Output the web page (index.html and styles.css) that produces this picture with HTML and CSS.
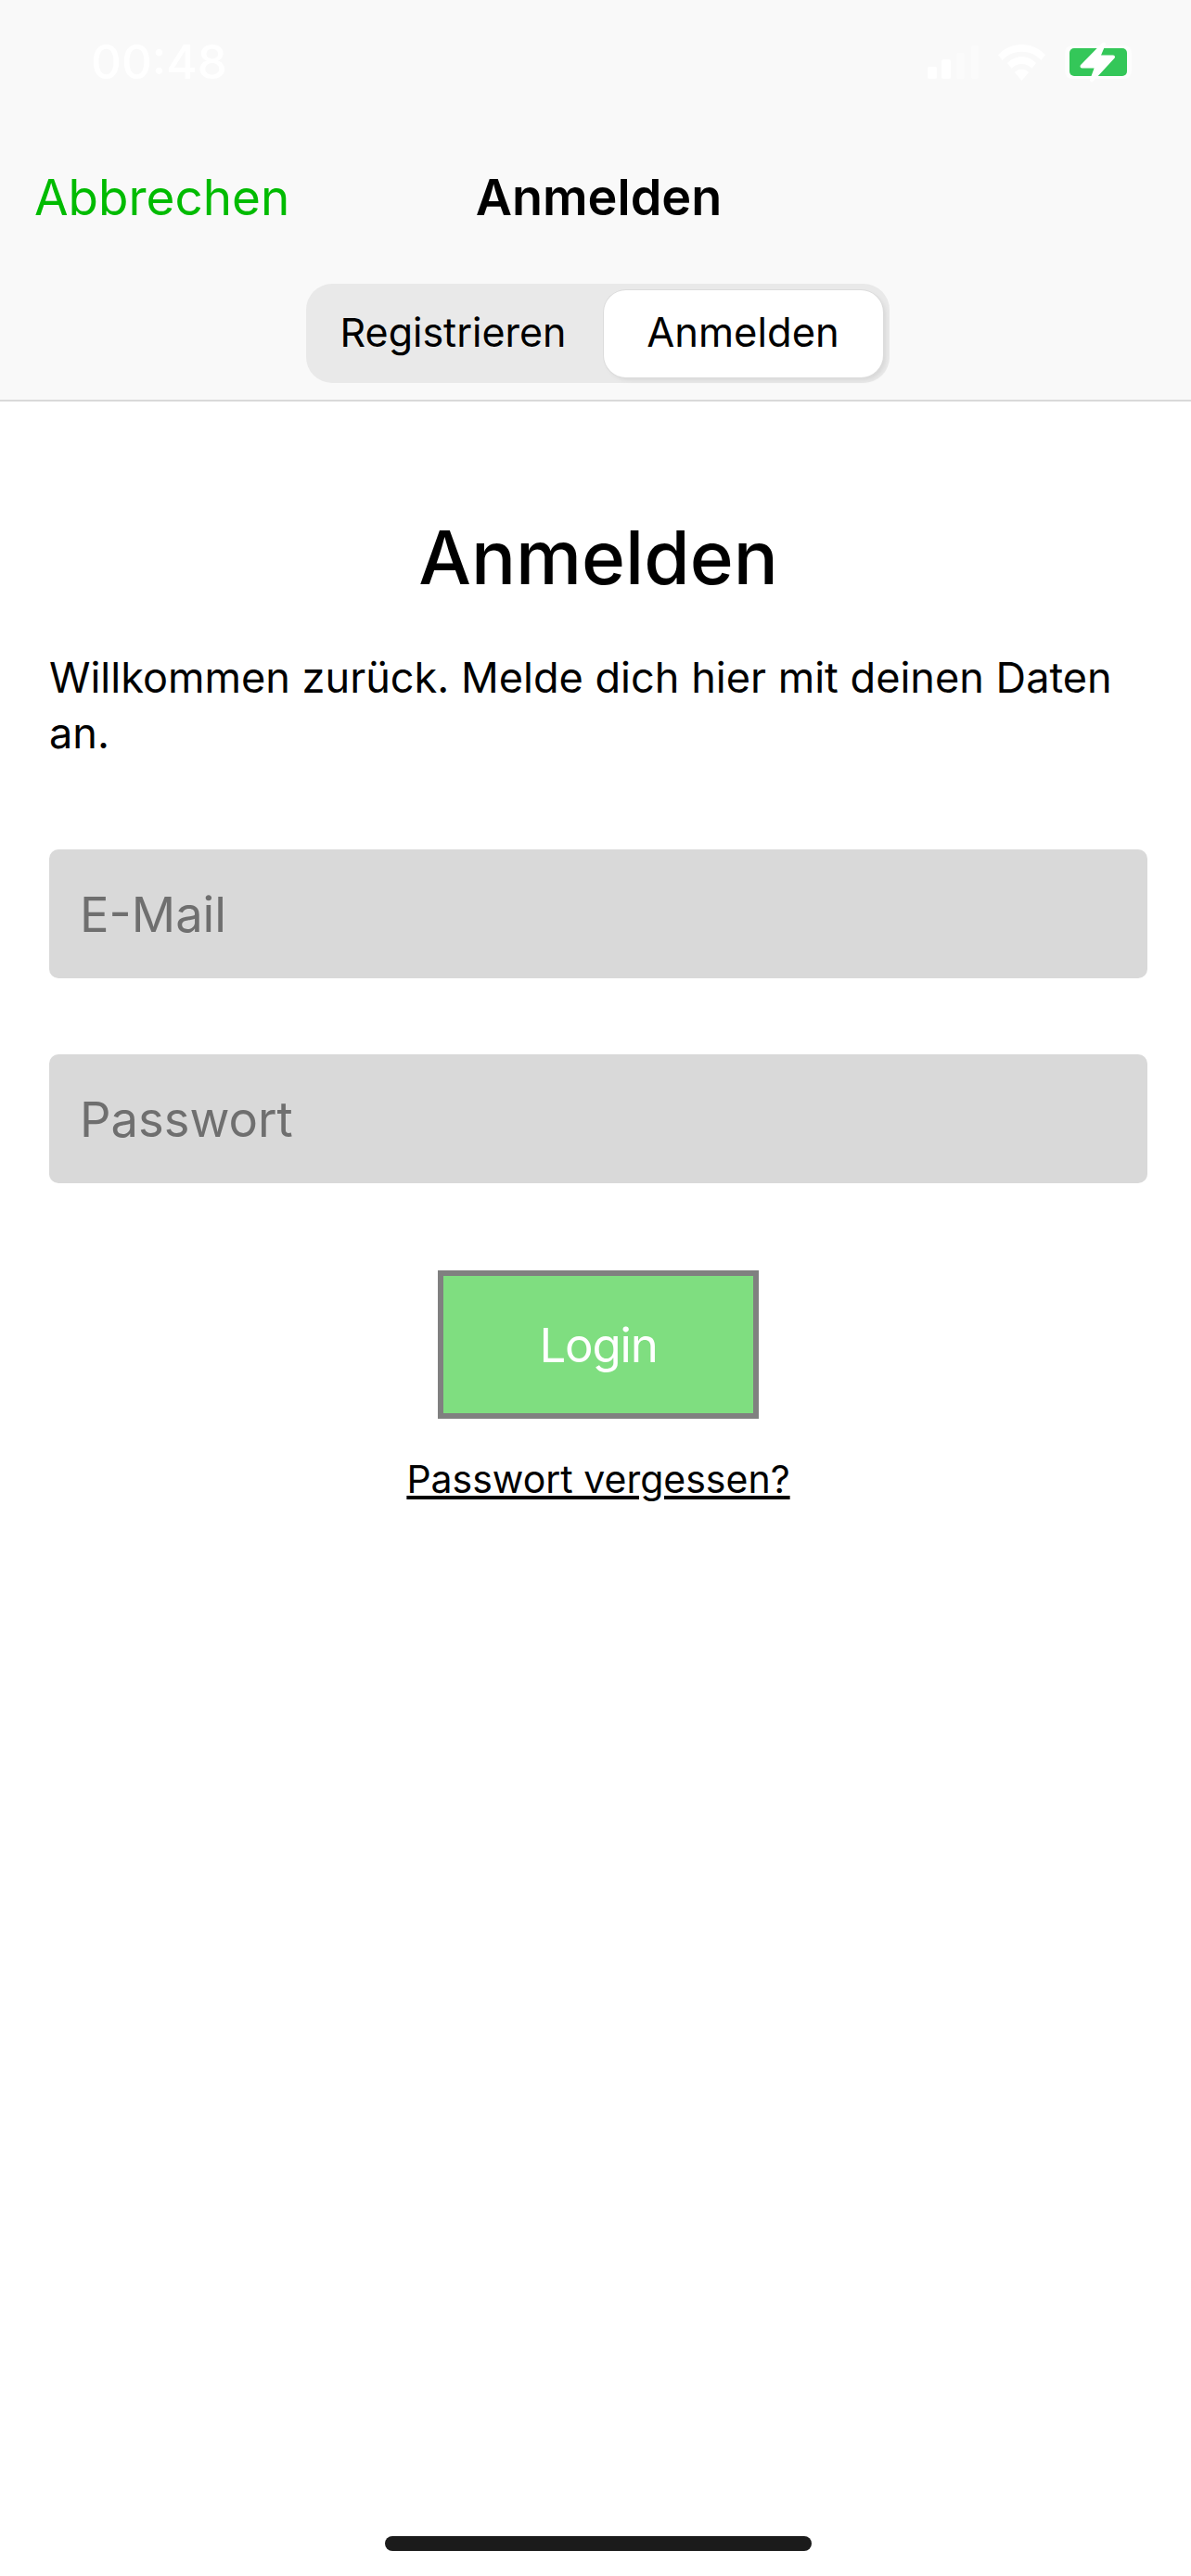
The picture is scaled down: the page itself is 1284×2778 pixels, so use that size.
FILE: index.html
```html
<!DOCTYPE html>
<html lang="de">
<head>
    <meta charset="UTF-8">
    <meta name="viewport" content="width=device-width, initial-scale=1.0">
    <title>Anmelden</title>
    <link rel="stylesheet" href="styles.css">
</head>
<body>
    <div class="screen">
        <header class="top">
            <div class="status-bar">
                <span class="time">00:48</span>
                <div class="status-icons">
                    <svg class="icon-signal" width="55" height="36" viewBox="0 0 55 36">
                        <rect x="0" y="23" width="10" height="13" rx="2" fill="#fff"/>
                        <rect x="15" y="15" width="10" height="21" rx="2" fill="#fff"/>
                        <rect x="31" y="8" width="9" height="28" rx="2" fill="#fff" opacity="0.35"/>
                        <rect x="47" y="0" width="8" height="36" rx="2" fill="#fff" opacity="0.35"/>
                    </svg>
                    <svg class="icon-wifi" width="51" height="39" viewBox="0 0 54 38" preserveAspectRatio="none">
                        <path d="M27 0C16.500 0 7 4 0 11l5 5.500C11 10.500 18.500 7.500 27 7.500s16 3 22 9l5-5.500C47 4 37.500 0 27 0z" fill="#fff"/>
                        <path d="M27 13c-6.500 0-12 2.500-16.500 6.500l5 5.500c3-2.800 7-4.500 11.500-4.500s8.500 1.700 11.500 4.500l5-5.500C39 15.500 33.500 13 27 13z" fill="#fff"/>
                        <path d="M27 26c-3.200 0-6 1.200-8 3.200L27 38l8-8.800c-2-2-4.800-3.200-8-3.200z" fill="#fff"/>
                    </svg>
                    <svg class="icon-battery" width="64" height="40" viewBox="0 0 64 40">
                        <rect x="-4" y="2" width="72" height="36" rx="8" fill="#fff" opacity="0.6"/>
                        <rect x="1" y="5" width="62" height="30" rx="5" fill="#34c759"/>
                        <path d="M38 0.500L32 14.500H48L25 39.500L30.500 24.500H14.500z" fill="#fff" stroke="#fff" stroke-width="4" stroke-linejoin="round"/>
                    </svg>
                </div>
            </div>
            <nav class="nav-bar">
                <a class="nav-cancel">Abbrechen</a>
                <span class="nav-title">Anmelden</span>
            </nav>
            <div class="segment-wrap">
                <div class="segment">
                    <button class="segment-btn">Registrieren</button>
                    <button class="segment-btn active">Anmelden</button>
                </div>
            </div>
        </header>

        <main class="content">
            <h1 class="heading">Anmelden</h1>
            <p class="intro">Willkommen zurück. Melde dich hier mit deinen Daten an.</p>
            <form class="login-form">
                <input class="field" type="email" placeholder="E-Mail">
                <input class="field" type="password" placeholder="Passwort">
                <button class="btn-login" type="button">Login</button>
                <a class="forgot" href="#">Passwort vergessen?</a>
            </form>
        </main>

        <div class="home-bar"><span class="home-indicator"></span></div>
    </div>
</body>
</html>
```

FILE: styles.css
```css
* {
    box-sizing: border-box;
}

body {
    margin: 0;
    background-color: #fff;
    font-family: Inter, 'Liberation Sans', sans-serif;
    color: #000;
}

.screen {
    display: flex;
    flex-direction: column;
    height: 2778px;
    overflow: hidden;
}

.top {
    height: 433px;
    background-color: #f9f9f9;
    border-bottom: 2px solid #d9d9d9;
    flex-shrink: 0;
}

.status-bar {
    display: flex;
    justify-content: space-between;
    align-items: center;
    height: 134px;
    padding: 0 68px 0 98px;
}

.time {
    color: #fff;
    font-size: 51px;
    font-weight: 500;
    line-height: 60px;
}

.status-icons {
    display: flex;
    align-items: center;
    gap: 21px;
}

.status-icons svg {
    overflow: visible;
}

.icon-battery {
    margin-left: 4px;
}

.nav-bar {
    display: grid;
    grid-template-columns: 1fr auto 1fr;
    align-items: center;
    height: 62px;
    margin-top: 46px;
    padding: 0 30px 0 37px;
}

.nav-cancel {
    color: #00bb00;
    font-size: 53px;
}

.nav-title {
    font-size: 54px;
    font-weight: 600;
}

.segment-wrap {
    display: flex;
    justify-content: center;
    margin-top: 64px;
    padding-left: 4px;
}

.segment {
    display: flex;
    align-items: stretch;
    width: 629px;
    height: 107px;
    padding: 7px 7px 6px 0;
    background-color: #e9e9e9;
    border-radius: 28px;
}

.segment-btn {
    flex: 1;
    border: none;
    background: none;
    font-family: inherit;
    font-size: 43px;
    color: #000;
    padding: 0 3px 5px 0;
    border-radius: 24px;
}

.segment-btn.active {
    flex: 0 0 301px;
    padding-right: 0;
    font-size: 43.500px;
    background-color: #fff;
    box-shadow: 0 0 0 1px #dcdcdc, 3px 3px 4px #d8d8d8;
}

.content {
    flex: 1;
    padding: 0 47px 0 53px;
}

.heading {
    margin: 118px 0 0;
    font-size: 80px;
    font-weight: 500;
    line-height: 100px;
    text-align: center;
}

.intro {
    margin: 50px 0 0;
    font-size: 45.100px;
    line-height: 60px;
}

.login-form {
    display: flex;
    flex-direction: column;
    align-items: center;
    margin-top: 95px;
}

.field {
    display: block;
    width: 100%;
    height: 139px;
    margin-bottom: 82px;
    padding: 0 33px;
    border: none;
    border-radius: 10px;
    background-color: #d9d9d9;
    font-family: inherit;
    font-size: 52.500px;
    color: #000;
}

.field::placeholder {
    color: #6f6f6f;
    opacity: 1;
}

.field + .btn-login {
    margin-top: 12px;
}

.btn-login {
    width: 346px;
    height: 160px;
    border: 6px solid #808080;
    background-color: #7fde80;
    color: #fff;
    font-family: inherit;
    font-size: 51px;
    letter-spacing: -1.200px;
    padding: 0;
}

.forgot {
    margin-top: 39px;
    font-size: 41px;
    line-height: 52px;
    color: #000;
    text-decoration: underline;
}

.home-bar {
    display: flex;
    justify-content: center;
    height: 43px;
    padding-left: 6px;
    flex-shrink: 0;
}

.home-indicator {
    width: 460px;
    height: 16px;
    border-radius: 8px;
    background-color: #1b1b1b;
}
```
